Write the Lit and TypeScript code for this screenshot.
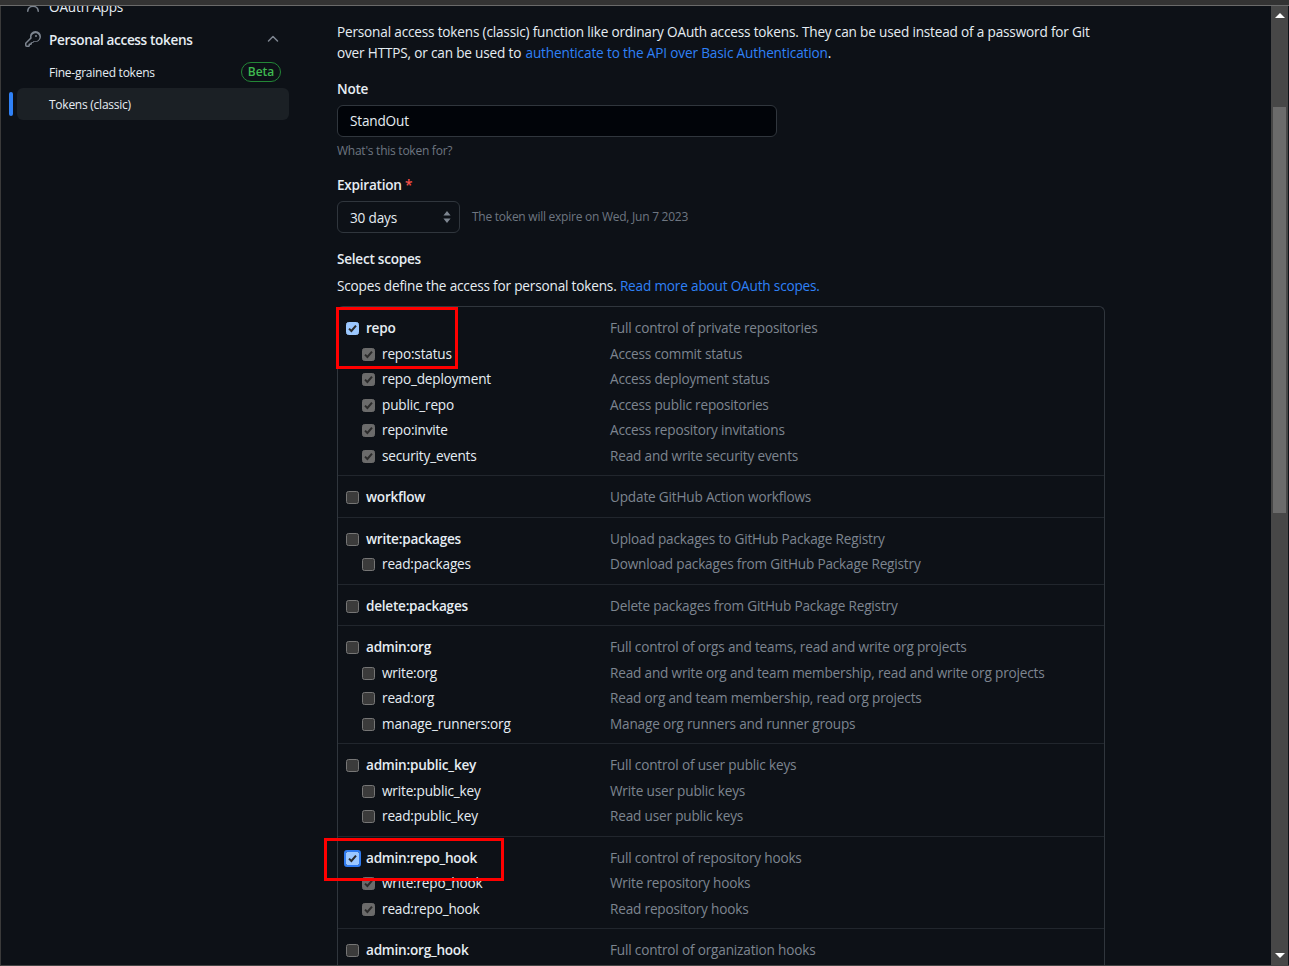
import { LitElement, html, css, svg } from 'lit';
import { customElement } from 'lit/decorators.js';
import { classMap } from 'lit/directives/class-map.js';

type Scope = { name: string; desc: string; checked?: boolean; focus?: boolean };

const GROUPS: Scope[][] = [
  [
    { name: 'repo', desc: 'Full control of private repositories', checked: true },
    { name: 'repo:status', desc: 'Access commit status', checked: true },
    { name: 'repo_deployment', desc: 'Access deployment status', checked: true },
    { name: 'public_repo', desc: 'Access public repositories', checked: true },
    { name: 'repo:invite', desc: 'Access repository invitations', checked: true },
    { name: 'security_events', desc: 'Read and write security events', checked: true }
  ],
  [{ name: 'workflow', desc: 'Update GitHub Action workflows' }],
  [
    { name: 'write:packages', desc: 'Upload packages to GitHub Package Registry' },
    { name: 'read:packages', desc: 'Download packages from GitHub Package Registry' }
  ],
  [{ name: 'delete:packages', desc: 'Delete packages from GitHub Package Registry' }],
  [
    { name: 'admin:org', desc: 'Full control of orgs and teams, read and write org projects' },
    { name: 'write:org', desc: 'Read and write org and team membership, read and write org projects' },
    { name: 'read:org', desc: 'Read org and team membership, read org projects' },
    { name: 'manage_runners:org', desc: 'Manage org runners and runner groups' }
  ],
  [
    { name: 'admin:public_key', desc: 'Full control of user public keys' },
    { name: 'write:public_key', desc: 'Write user public keys' },
    { name: 'read:public_key', desc: 'Read user public keys' }
  ],
  [
    { name: 'admin:repo_hook', desc: 'Full control of repository hooks', checked: true, focus: true },
    { name: 'write:repo_hook', desc: 'Write repository hooks', checked: true },
    { name: 'read:repo_hook', desc: 'Read repository hooks', checked: true }
  ],
  [
    { name: 'admin:org_hook', desc: 'Full control of organization hooks' },
    { name: 'write:org_hook', desc: 'Write organization hooks' }
  ]
];

const KEY = svg`<path d="M10.5 0a5.499 5.499 0 1 1-1.288 10.848l-.932.932a.75.75 0 0 1-.53.22H7v.75a.75.75 0 0 1-.22.53l-.5.5a.75.75 0 0 1-.53.22H5v.75a.75.75 0 0 1-.22.53l-.5.5a.75.75 0 0 1-.53.22h-2A1.75 1.75 0 0 1 0 14.25v-2c0-.199.079-.389.22-.53l4.932-4.932A5.5 5.5 0 0 1 10.5 0Zm-4 5.5c-.001.431.069.86.205 1.269a.75.75 0 0 1-.181.768L1.5 12.56v1.69c0 .138.112.25.25.25h1.69l.06-.06v-1.19a.75.75 0 0 1 .75-.75h1.19l.06-.06v-.44a.75.75 0 0 1 .75-.75h1.19l1.023-1.025a.75.75 0 0 1 .768-.18A4 4 0 1 0 6.5 5.5ZM11 6a1 1 0 1 1 0-2 1 1 0 0 1 0 2Z"/>`;
const PERSON = svg`<path d="M10.561 8.073a6.005 6.005 0 0 1 3.432 5.142.75.75 0 1 1-1.498.07 4.5 4.5 0 0 0-8.99 0 .75.75 0 0 1-1.498-.07 6.004 6.004 0 0 1 3.431-5.142 3.999 3.999 0 1 1 4.123 0ZM10.5 4.5a2.5 2.5 0 1 0-5 0 2.5 2.5 0 0 0 5 0Z"/>`;

@customElement('app-root')
export class AppRoot extends LitElement {
  static styles = css`
    :host {
      display: block;
      height: 966px;
      overflow: hidden;
      background: #0d1117;
      color: #e6edf3;
      font-family: "Open Sans", "Noto Sans", sans-serif;
      font-size: 13.6px;
      letter-spacing: -0.18px;
      position: relative;
    }
    .chrome-top {
      height: 5px;
      background: #333;
      border-bottom: 1px solid #6a6a6a;
    }
    .page {
      display: flex;
      height: 959px;
      border-left: 1px solid #3a3a3a;
      border-bottom: 1px solid #444;
      overflow: hidden;
    }
    .sidebar {
      width: 288px;
      flex: none;
      padding-left: 8px;
      margin-top: -16px;
    }
    .main {
      flex: 1;
      min-width: 0;
      padding-left: 40px;
    }
    .scrollbar {
      width: 17px;
      flex: none;
      background: #474747;
      display: flex;
      flex-direction: column;
      align-items: center;
      margin-right: 1px;
    }
    .arrow {
      width: 0;
      height: 0;
      border-left: 5px solid transparent;
      border-right: 5px solid transparent;
      margin-top: 7px;
      border-bottom: 5px solid #fff;
    }
    .arrow.down {
      margin-top: 0;
      border-bottom: none;
      border-top: 5px solid #fff;
    }
    .thumb {
      width: 13px;
      height: 406px;
      background: #6b6b6b;
      margin: 89px 0 440px;
    }

    .nav-row {
      display: flex;
      align-items: center;
      height: 32px;
      padding: 0 8px;
      gap: 8px;
      margin-left: 8px;
      width: 272px;
      box-sizing: border-box;
    }
    .nav-row svg.icon {
      width: 16px;
      height: 16px;
      fill: #7d8590;
      flex: none;
    }
    .nav-row.parent {
      font-weight: 600;
      letter-spacing: -0.36px;
      margin-top: 1px;
      margin-bottom: 1px;
    }
    .chev {
      margin-left: auto;
      width: 16px;
      height: 16px;
      fill: none;
      stroke: #7d8590;
      stroke-width: 1.5;
      stroke-linecap: round;
      stroke-linejoin: round;
    }
    .nav-sub {
      padding-left: 32px;
      font-size: 12px;
      letter-spacing: -0.25px;
      justify-content: space-between;
    }
    .beta {
      box-sizing: border-box;
      border: 1px solid #238636;
      color: #3fb950;
      font-size: 12px;
      font-weight: 600;
      letter-spacing: 0;
      border-radius: 10px;
      height: 20px;
      line-height: 18px;
      width: 40px;
      text-align: center;
    }
    .current-wrap {
      position: relative;
    }
    .current {
      background: #1b2025;
      border-radius: 6px;
    }
    .current-bar {
      position: absolute;
      left: 0;
      top: 4px;
      width: 4px;
      height: 24px;
      border-radius: 2px;
      background: #2f81f7;
    }

    p { margin: 0; }
    a { color: #2f81f7; text-decoration: none; }
    .intro {
      line-height: 21px;
      padding-top: 15px;
      width: 768px;
    }
    .intro a { letter-spacing: -0.15px; margin-left: 1px; }
    .label {
      font-weight: 600;
      letter-spacing: -0.25px;
      line-height: 21px;
    }
    .note-label { margin-top: 15px; }
    .input {
      margin-top: 6px;
      width: 440px;
      height: 32px;
      box-sizing: border-box;
      background: #010409;
      border: 1px solid #30363d;
      border-radius: 6px;
      padding: 0 12px;
      line-height: 30px;
    }
    .hint {
      font-size: 12px;
      letter-spacing: -0.25px;
      color: #6e7681;
      line-height: 18px;
    }
    .note-hint { margin-top: 5px; }
    .exp-label { margin-top: 14px; }
    .req { color: #f85149; }
    .exp-row {
      display: flex;
      align-items: center;
      gap: 12px;
      margin-top: 6px;
    }
    .select {
      width: 123px;
      height: 32px;
      box-sizing: border-box;
      background: #0d1117;
      border: 1px solid #30363d;
      border-radius: 6px;
      padding: 0 8px 0 12px;
      display: flex;
      align-items: center;
      justify-content: space-between;
    }
    .select svg { width: 8px; height: 12px; fill: #7d8590; }
    .scopes-label { margin-top: 15px; }
    .scopes-text { margin-top: 6px; line-height: 21px; }
    .table {
      margin-top: 10px;
      width: 768px;
      box-sizing: border-box;
      border: 1px solid #30363d;
      border-bottom: none;
      border-radius: 6px 6px 0 0;
    }
    .group {
      padding: 8px 0 8px 8px;
      border-top: 1px solid #21262d;
      margin-top: -1px;
    }
    .group:first-child { border-top-color: transparent; }
    .row {
      display: grid;
      grid-template-columns: 264px 1fr;
      height: 25.5px;
      align-items: center;
    }
    .scope {
      display: flex;
      align-items: center;
      gap: 7px;
    }
    .scope.sub { padding-left: 16px; }
    .scope.top { font-weight: 600; letter-spacing: -0.25px; }
    .desc { color: #7d8590; }
    .box {
      width: 13px;
      height: 13px;
      margin-top: 2px;
      box-sizing: border-box;
      border-radius: 2.5px;
      background: #3b3b3b;
      border: 1px solid #767676;
      flex: none;
      display: flex;
    }
    .box svg {
      width: 11px;
      height: 11px;
      fill: none;
      stroke: #2b2b2b;
      stroke-width: 2;
    }
    .box.checked { background: #6b6b6b; border-color: #6b6b6b; }
    .box.checked.top { background: #9cc8ff; border-color: #9cc8ff; }
    .box.focus { outline: 2px solid #2f7bf0; border-radius: 1px; }
    .mark {
      position: absolute;
      border: 3px solid #f00;
      box-sizing: border-box;
      pointer-events: none;
    }
    .mark.one { left: 336px; top: 307px; width: 122px; height: 62px; }
    .mark.two { left: 324px; top: 838px; width: 180px; height: 43px; }
  `;

  renderScope(s: Scope, top: boolean) {
    return html`
      <div class="row">
        <div class=${classMap({ scope: true, sub: !top, top })}>
          <span class=${classMap({ box: true, checked: !!s.checked, top, focus: !!s.focus })}>
            ${s.checked ? html`<svg viewBox="0 0 11 11"><path d="M2 5.6l2.4 2.4L9 2.6"/></svg>` : ''}
          </span>
          <span>${s.name}</span>
        </div>
        <div class="desc">${s.desc}</div>
      </div>
    `;
  }

  renderSidebar() {
    return html`
      <nav class="sidebar">
        <div class="nav-row">
          <svg class="icon" viewBox="0 0 16 16">${PERSON}</svg>
          <span>OAuth Apps</span>
        </div>
        <div class="nav-row parent">
          <svg class="icon" viewBox="0 0 16 16">${KEY}</svg>
          <span>Personal access tokens</span>
          <svg class="chev" viewBox="0 0 16 16"><path d="M3.5 10L8 5.5l4.5 4.5"/></svg>
        </div>
        <div class="nav-row nav-sub">
          <span>Fine-grained tokens</span>
          <span class="beta">Beta</span>
        </div>
        <div class="current-wrap">
          <div class="current-bar"></div>
          <div class="nav-row nav-sub current"><span>Tokens (classic)</span></div>
        </div>
      </nav>
    `;
  }

  render() {
    return html`
      <div class="chrome-top"></div>
      <div class="page">
        ${this.renderSidebar()}
        <main class="main">
          <p class="intro">
            Personal access tokens (classic) function like ordinary OAuth access tokens. They can be used instead of a password for Git over HTTPS, or can be used to
            <a href="#">authenticate to the API over Basic Authentication</a>.
          </p>
          <div class="label note-label">Note</div>
          <div class="input">StandOut</div>
          <div class="hint note-hint">What's this token for?</div>
          <div class="label exp-label">Expiration <span class="req">*</span></div>
          <div class="exp-row">
            <div class="select">
              <span>30 days</span>
              <svg viewBox="0 0 8 12"><path d="M4 0l3.6 4.6H.4zM4 12L.4 7.4h7.2z"/></svg>
            </div>
            <span class="hint">The token will expire on Wed, Jun 7 2023</span>
          </div>
          <div class="label scopes-label">Select scopes</div>
          <p class="scopes-text">Scopes define the access for personal tokens. <a href="#">Read more about OAuth scopes.</a></p>
          <div class="table">
            ${GROUPS.map(g => html`
              <div class="group">${g.map((s, i) => this.renderScope(s, i === 0))}</div>
            `)}
          </div>
        </main>
        <div class="scrollbar">
          <div class="arrow"></div>
          <div class="thumb"></div>
          <div class="arrow down"></div>
        </div>
      </div>
      <div class="mark one"></div>
      <div class="mark two"></div>
    `;
  }
}
